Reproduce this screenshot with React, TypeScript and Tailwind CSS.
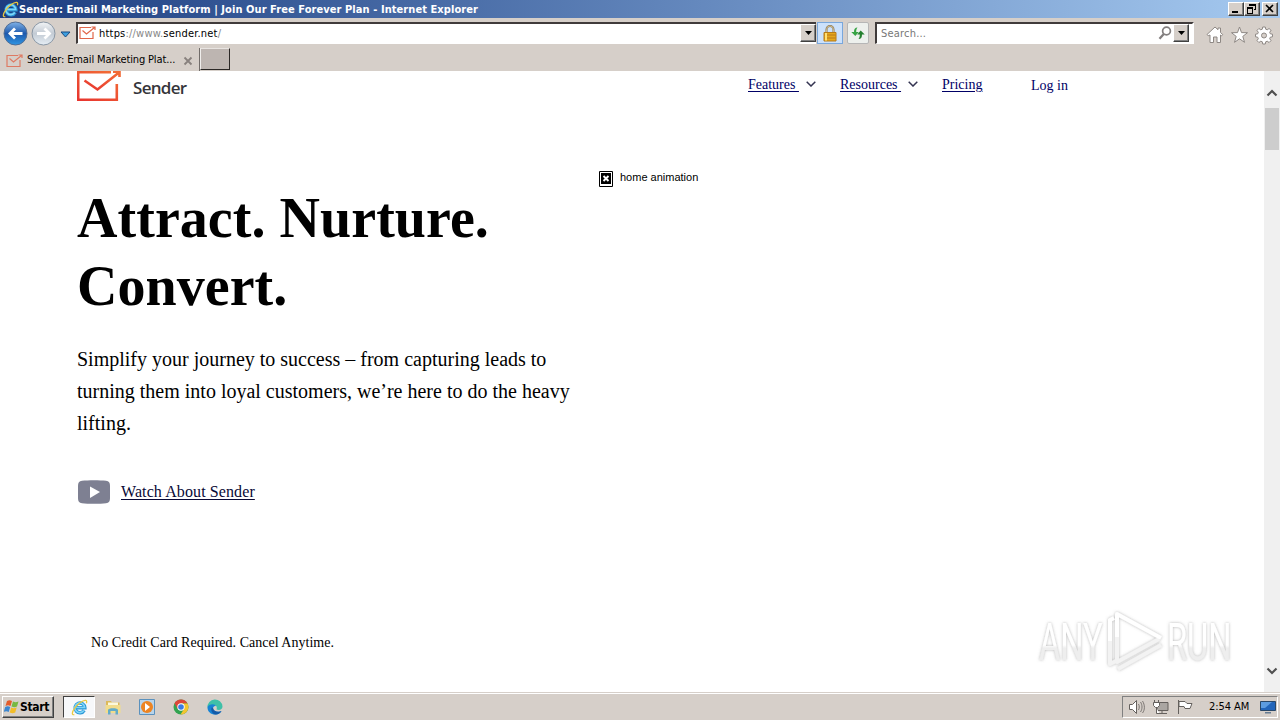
import type { ReactNode } from "react";

const tahoma = "font-['DejaVu_Sans_Condensed','DejaVu_Sans',sans-serif] [font-stretch:condensed]";
const raised =
  "border border-t-white border-l-white border-r-[#404040] border-b-[#404040] shadow-[inset_-1px_-1px_0_#808080]";

function IeLogo({ className }: { className: string }) {
  return (
    <svg viewBox="0 0 18 18" className={className} fill="none">
      <path d="M14 12a5.200 5.200 0 1 1 .7-2.700H5.500" stroke="#2b97d6" strokeWidth="3.600" />
      <path d="M13.600 12.200a5.200 5.200 0 1 1 .9-3.200H5.500" stroke="#7fd6f8" strokeWidth="1.700" />
      <path
        d="M3.500 16.600C.6 17.200.8 14 3.400 10.400 6.300 6 12.600.900 15.600 1.500c1.300.300 1.200 1.700.6 3"
        stroke="#ecc93c"
        strokeWidth="1.300"
      />
    </svg>
  );
}

function MailLogo({ className }: { className: string }) {
  return (
    <svg viewBox="0 0 17 14" className={className} fill="none" stroke="#e0664a" strokeWidth="1.200">
      <path d="M12 1.500H1v11h13V6M3.500 4.500 7.500 8 15.500 1.500M12.500 1h3.500v3" />
    </svg>
  );
}

function WinButton({ children }: { children: ReactNode }) {
  return (
    <button className={`h-[14px] w-4 bg-[#d6cfc9] ${raised}`}>
      <svg viewBox="0 0 14 12" className="h-3 w-[14px]" fill="none" stroke="#000" shapeRendering="crispEdges">
        {children}
      </svg>
    </button>
  );
}

function DropButton({ className }: { className: string }) {
  return (
    <button className={`flex items-center justify-center bg-[#d6cfc9] ${raised} ${className}`}>
      <svg viewBox="0 0 7 4" className="h-1 w-[7px]">
        <path d="M0 0h7L3.500 4z" />
      </svg>
    </button>
  );
}

function TitleBar() {
  return (
    <header className="flex h-[18px] items-center bg-linear-to-r from-[#1d3d80] from-0% via-[#6f93c6] via-62% to-[#a6caf0]">
      <IeLogo className="ml-[2px] h-[17px] w-[17px]" />
      <span className={`${tahoma} mt-[1px] w-[470px] text-[11px] leading-[17px] font-bold whitespace-nowrap text-white tracking-[0.07px]`}>
        Sender: Email Marketing Platform | Join Our Free Forever Plan - Internet Explorer
      </span>
      <div className="mr-[2px] ml-auto flex">
        <WinButton>
          <path d="M3 9h6" strokeWidth="2" />
        </WinButton>
        <WinButton>
          <path d="M4.500 1.500h6v5h-2M2.500 5v5h5V5" />
          <path d="M4 2h7M2 5h6" strokeWidth="2" />
        </WinButton>
        <div className="ml-[2px] flex">
          <WinButton>
            <path d="m3 2 7 7m0-7L3 9" strokeWidth="1.600" shapeRendering="auto" />
          </WinButton>
        </div>
      </div>
    </header>
  );
}

function Toolbar() {
  return (
    <div className="flex h-[30px] items-start bg-[#d6cfc9] pt-1">
      <svg viewBox="0 0 74 28" className="-mt-[2px] h-7 w-[74px]" fill="none">
        <defs>
          <linearGradient id="back" x2="0" y2="1">
            <stop stopColor="#7fb2e8" />
            <stop offset=".5" stopColor="#1f59ac" />
            <stop offset="1" stopColor="#2f96e4" />
          </linearGradient>
          <linearGradient id="forward" x2="0" y2="1">
            <stop stopColor="#f2f4f6" />
            <stop offset=".5" stopColor="#c3cbd4" />
            <stop offset="1" stopColor="#e6eef5" />
          </linearGradient>
        </defs>
        <circle cx="15.500" cy="13.500" r="11.500" fill="url(#back)" stroke="#526d93" />
        <circle cx="43.500" cy="13.500" r="11.500" fill="url(#forward)" stroke="#8996a4" />
        <path d="M22.500 13.500H10m5-5-5 5 5 5M37 13.500h12.500M44.500 8.500l5 5-5 5" stroke="#fff" strokeWidth="2.800" />
        <path d="M61 12h9l-4.500 5z" fill="#3c9fe0" stroke="#174980" />
      </svg>
      <div className="ml-[2px] flex h-[22px] w-[740px] border-t-2 border-l-2 border-b border-t-[#403b3b] border-l-[#403b3b] border-b-white bg-white">
        <MailLogo className="mt-[2px] ml-[1px] h-[14px] w-[17px]" />
        <span className={`${tahoma} ml-[3px] pt-[1px] text-[11px] leading-[18px] whitespace-nowrap text-[#888] tracking-[0.2px]`}>
          <span className="text-black">https</span>://www.<span className="text-black">sender.net</span>/
        </span>
        <DropButton className="ml-auto h-[18px] w-4" />
      </div>
      <button className="ml-[1px] flex h-[22px] w-[26px] items-center justify-center border border-[#79a7dc] bg-[#cce1fb]">
        <svg viewBox="0 0 14 17" className="h-[17px] w-[14px]" fill="none">
          <path d="M3.500 8V4.500a3.500 3.500 0 0 1 7 0V8" stroke="#8c7651" strokeWidth="2" />
          <path d="M3.500 8V4.500a3.500 3.500 0 0 1 7 0V8" stroke="#e5d6a8" strokeWidth=".7" />
          <path d="M1 7.500h12v8.500H1z" fill="#e5a71c" stroke="#b67a19" />
          <path d="M1.500 10h11m-11 3h11" stroke="#b9791b" />
          <path d="M3 8v7.500" stroke="#ffe075" strokeWidth="2" />
        </svg>
      </button>
      <button className="ml-1 flex h-[22px] w-[22px] items-center justify-center rounded-xs border border-[#b6b6b6] bg-[#edf0ed]">
        <svg viewBox="0 0 14 14" className="h-[14px] w-[14px]">
          <path d="M6.500 1.500C4 1.500 3 3 3 6H.3l4 4 3.500-4H5.200c0-2 .2-3 1.300-4.500z" fill="#36a344" />
          <path d="M7.500 13c2.500 0 3.500-1.500 3.500-4.500h2.700l-4-4-3.500 4h2.600c0 2-.2 3-1.300 4.500z" fill="#23802f" />
        </svg>
      </button>
      <div className="ml-[6px] flex h-[22px] w-[319px] border-t-2 border-l-2 border-r-2 border-b border-t-[#403b3b] border-l-[#403b3b] border-r-white border-b-white bg-white">
        <span className={`${tahoma} ml-1 pt-[1px] text-[11px] leading-[18px] text-[#777] tracking-[0.2px]`}>Search...</span>
        <svg viewBox="0 0 14 14" className="mt-[2px] ml-auto h-[14px] w-[14px]" fill="none" stroke="#827e7e">
          <circle cx="8.500" cy="5" r="3.900" strokeWidth="1.700" />
          <path d="m5.800 8-4.300 4.800" strokeWidth="2.300" />
        </svg>
        <DropButton className="mr-[3px] ml-[1px] h-[18px] w-4" />
      </div>
      <svg viewBox="0 0 72 20" className="mt-[3px] ml-[11px] h-5 w-[72px]" fill="#fff" stroke="#8e8884">
        <path d="m2 9.500 8-7.500 3 2.700V3h2.500v4.500l2.200 2-1.200 1.400-1-.9v7.500H12V12H8.500v5.500H5V10l-1.800.8z" />
        <path d="m34.500 2 2 5.600 6 .1-4.700 3.700 1.700 5.900-5-3.500-5 3.500 1.700-5.900-4.700-3.700 6-.1z" />
        <path d="M57.700 2h2.600l.4 2.200 1.500.6 1.900-1.300L66 5.400l-1.300 1.900.6 1.500 2.200.4v2.600l-2.200.4-.6 1.500 1.300 1.900-1.900 1.900-1.900-1.300-1.500.6-.4 2.200h-2.600l-.4-2.200-1.500-.6-1.900 1.300L52 15.600l1.300-1.900-.6-1.500-2.200-.4V9.200l2.200-.4.6-1.500L52 5.400l1.900-1.900 1.900 1.300 1.500-.6z" />
        <circle cx="59" cy="10.500" r="2.500" fill="#d6cfc9" />
      </svg>
    </div>
  );
}

function Tabs() {
  return (
    <div className="flex h-[23px] bg-[#d6cfc9]">
      <div className="flex w-[200px] items-center border-r border-[#716c69] pt-[2px]">
        <MailLogo className="ml-[6px] h-[14px] w-[17px] opacity-80" />
        <span className={`${tahoma} ml-1 w-[151px] text-[11px] whitespace-nowrap text-black tracking-[-0.14px]`}>
          Sender: Email Marketing Plat...
        </span>
        <svg viewBox="0 0 10 10" className="ml-[5px] h-[10px] w-[10px]" stroke="#88817e" strokeWidth="1.800">
          <path d="m1.500 1.500 7 7m0-7-7 7" />
        </svg>
      </div>
      <div className="h-[22px] w-[30px] border border-t-[#e8e4e1] border-l-[#f0eeec] border-r-[#2a2725] border-b-[#2a2725] bg-[#bdb5b1]" />
    </div>
  );
}

function Chevron() {
  return (
    <svg viewBox="0 0 10 6" className="mt-[10px] h-[6px] w-[10px]" fill="none" stroke="#343451" strokeWidth="1.500">
      <path d="m.700.700 4.300 4.300L9.300.700" />
    </svg>
  );
}

function Nav() {
  return (
    <div className="flex h-[34px] pl-[77px]">
      <div className="flex w-[671px]">
        <svg viewBox="0 0 44 30" className="h-[30px] w-[44px]" fill="none" stroke="url(#brand)">
          <defs>
            <linearGradient id="brand" x1="0" y1="1" x2=".8" y2="0">
              <stop stopColor="#e8352f" />
              <stop offset="1" stopColor="#f26a35" />
            </linearGradient>
          </defs>
          <path d="M34 1.200H1.200v27.600h38.600V13" strokeWidth="2.600" />
          <path d="m7.500 9.500 13 9L42 1.500M36 .7h6.500V6" strokeWidth="2.600" />
        </svg>
        <span className="mt-[5px] ml-3 font-['Open_Sans',sans-serif] text-[17px] leading-6 font-semibold tracking-[-0.7px] text-[#35353a]">
          Sender
        </span>
      </div>
      <nav className="flex text-sm leading-[28px] text-[#000066]">
        <a className="w-[58px] whitespace-pre underline underline-offset-2">{"Features "}</a>
        <Chevron />
        <a className="ml-6 w-[68px] whitespace-pre underline underline-offset-2">{"Resources "}</a>
        <Chevron />
        <a className="ml-6 w-[89px] underline underline-offset-2">Pricing</a>
        <a className="mt-[1px]">Log in</a>
      </nav>
    </div>
  );
}

function Watermark() {
  return (
    <svg viewBox="0 0 210 76" className="absolute top-[532px] left-[1030px] h-[76px] w-[210px]" fill="none">
      <defs>
        <filter id="halo" x="-10%" y="-10%" width="120%" height="120%">
          <feDropShadow dx="0" dy="0" stdDeviation="1.800" floodColor="#777" floodOpacity=".55" />
        </filter>
        <linearGradient id="fade" x1="0" y1="0" x2="0" y2="1">
          <stop offset=".55" stopColor="#fff" />
          <stop offset=".6" stopColor="#eeeeee" />
        </linearGradient>
      </defs>
      <g filter="url(#halo)">
        <g fill="url(#fade)" className="font-[Roboto,sans-serif]" fontSize="51">
          <text transform="translate(9 57) scale(.64 1)">ANY</text>
          <text transform="translate(137 57) scale(.64 1)">RUN</text>
        </g>
        <g strokeLinejoin="round">
          <path d="M80 16v45l6-3M88 66l43-24" stroke="#f3f3f3" strokeWidth="4" />
          <path d="M87 11v48l42-23" stroke="#f3f3f3" strokeWidth="4" />
          <path d="M87 34V11l44 24M80 38V17l4-2" stroke="#fff" strokeWidth="4" />
        </g>
      </g>
    </svg>
  );
}

function Page() {
  return (
    <div className="relative flex h-[621px] bg-white font-['Liberation_Serif',serif] text-black">
      <main className="w-[1264px]">
        <Nav />
        <div className="flex pl-[77px]">
          <section className="w-[522px]">
            <h1 className="mt-[79px] text-[56px] leading-[68px] font-bold tracking-[0.05px]">
              Attract. Nurture.
              <br />
              Convert.
            </h1>
            <p className="mt-[23px] text-[20px] leading-8 whitespace-nowrap">
              Simplify your journey to success – from capturing leads to
              <br />
              turning them into loyal customers, we’re here to do the heavy
              <br />
              lifting.
            </p>
            <a className="mt-[37px] flex h-8 items-center text-base tracking-[0.1px] text-[#080835]">
              <svg viewBox="0 0 32 24" className="mr-[11px] ml-[1px] h-6 w-8">
                <path d="M4 .8C10 0 22 0 28 .8c3 .4 4 2 4 5v12.400c0 3-1 4.600-4 5C22 24 10 24 4 23.200c-3-.4-4-2-4-5V5.800c0-3 1-4.600 4-5z" fill="#7e8092" />
                <path d="m12 6.500 10 5.500-10 6z" fill="#fff" />
              </svg>
              <span className="underline underline-offset-2">Watch About Sender</span>
            </a>
            <p className="mt-[125px] ml-[14px] text-sm leading-5 tracking-[0.02px]">No Credit Card Required. Cancel Anytime.</p>
          </section>
          <div className="mt-[65px] flex h-[17px] font-['Liberation_Sans',sans-serif] text-[11px] leading-[15px]">
            <svg viewBox="0 0 14 16" className="mt-[1px] h-4 w-[14px]">
              <path d="M.5.500h13v15H.500z" fill="#fff" stroke="#000" />
              <path d="M2 2h10v11H2z" />
              <path d="m4.500 5 5 5m0-5-5 5" stroke="#fff" strokeWidth="1.900" />
            </svg>
            <span className="ml-[7px]">home animation</span>
          </div>
        </div>
      </main>
      <aside className="flex w-4 flex-col items-center bg-[#f0f0f0] pt-[18px]">
        <svg viewBox="0 0 12 8" className="h-2 w-3" fill="none" stroke="#505050" strokeWidth="2.200">
          <path d="m1.500 6.500 4.500-4.500 4.500 4.500" />
        </svg>
        <div className="mt-[11px] h-[42px] w-[14px] bg-[#cdcdcd]" />
        <svg viewBox="0 0 12 8" className="mt-auto mb-[17px] h-2 w-3" fill="none" stroke="#505050" strokeWidth="2.200">
          <path d="m1.500 1.500 4.500 4.500 4.500-4.500" />
        </svg>
      </aside>
      <Watermark />
    </div>
  );
}

function Taskbar() {
  return (
    <footer className="flex h-7 items-start border-t border-[#d6cfc9] bg-[#d6cfc9] pt-[3px] shadow-[inset_0_1px_0_#fff]">
      <button className={`ml-[2px] flex h-[22px] w-[52px] items-center bg-[#d6cfc9] ${raised}`}>
        <svg viewBox="0 0 16 16" className="ml-[1px] h-4 w-4">
          <path d="M3 2c2-1 3-1 5 0L6.500 7c-2-1-3-1-5 0z" fill="#e45c2a" />
          <path d="M9 2.500c2 1 3 1 5.500 0L13 7.500c-2 1-3 1-5.500 0z" fill="#77b943" />
          <path d="M1.200 8c2-1 3-1 5 0L4.700 13c-2-1-3-1-5 0z" fill="#3c86cf" />
          <path d="M7.200 8.500c2 1 3 1 5.500 0l-1.500 5c-2 1-3 1-5.500 0z" fill="#f2bd29" />
        </svg>
        <span className={`${tahoma} text-xs font-bold tracking-[-0.350px] text-black`}>Start</span>
      </button>
      <div className="ml-[9px] flex h-[22px] w-8 items-center justify-center border border-t-[#404040] border-l-[#404040] border-r-white border-b-white bg-[#f7f8fa]">
        <IeLogo className="h-[17px] w-[17px]" />
      </div>
      <svg viewBox="0 0 16 16" className="mt-[3px] ml-[10px] h-4 w-4">
        <path d="M1 2h5l1 1.500h7.500V9H1z" fill="#dcb95a" />
        <path d="M3 3.500h10v4H3z" fill="#fbf8dc" />
        <path d="M.5 6h15v8H.500z" fill="#f1dc8c" />
        <path d="M3 15.500V11c0-2.500 10-2.500 10 0v4.500h-2.500V12h-5v3.500z" fill="#62abc8" />
      </svg>
      <svg viewBox="0 0 16 16" className="mt-[3px] ml-[18px] h-4 w-4">
        <path d="M.5.500h15v15H.500z" fill="#b8d4ea" stroke="#5b91bd" />
        <circle cx="8" cy="8" r="6" fill="#ed8422" />
        <path d="m6 4 5 4-5 4z" fill="#fff" />
      </svg>
      <svg viewBox="0 0 16 16" className="mt-[3px] ml-[18px] h-4 w-4">
        <circle cx="8" cy="8" r="7.500" fill="#32a350" />
        <path d="M1.500 4.200A7.500 7.500 0 0 1 14.500 4.500H8L4.700 10z" fill="#dc4639" />
        <path d="M14.500 4.500A7.500 7.500 0 0 1 7.500 15.500L11 10 8 4.500z" fill="#f4c52f" />
        <circle cx="8" cy="8" r="3.700" fill="#fff" />
        <circle cx="8" cy="8" r="2.800" fill="#397be3" />
      </svg>
      <svg viewBox="0 0 16 16" className="mt-[3px] ml-[18px] h-4 w-4">
        <path d="M.5 8.500A7.500 7.500 0 0 1 15.500 7.500c0 3-3 4-6 3 .8-2 .3-4.500-3-4.500-3 0-5 1-6 2.500z" fill="#3fc0a8" />
        <path d="M.5 8C2 4.500 8.500 4.300 9 7.300c-1-1-3 0-3 2 0 3 4.500 4.700 8.500 2.700C13 15 9.500 16 6.500 15.500 2.500 14.500.3 11.500.5 8z" fill="#1783d4" />
        <path d="M4.700 8.500C3.500 11 5 14.500 8 15.500c3 .2 5.500-1.500 6.500-3.500-3.500 1.500-8 .5-8.500-3z" fill="#145ba8" />
      </svg>
      <div className="mr-[2px] ml-auto flex h-[22px] w-[156px] items-center border border-t-[#808080] border-l-[#808080] border-r-white border-b-white">
        <svg viewBox="0 0 66 18" className="ml-[5px] h-[18px] w-[66px]" fill="#fff" stroke="#64605d">
          <path d="M1.500 6.500h3l4-4v13l-4-4h-3z" />
          <path d="M10.500 6c1 2 1 4 0 6m2-8c2 3 2 7 0 10m2-11c2.500 4 2.500 9 0 12" fill="none" strokeWidth=".8" />
          <path d="M29 4.500h11v8H29z" fill="#aaa6a2" />
          <path d="M29 15.500h10M34 13v2M26.500 2v3m4-3v3M25.500 4.500h6v3l-2 2h-2l-2-2zM28.500 10v5.500h3" />
          <path d="M50.500 2v14M51 3.500h6l2 2h5l-2 5h-5l-1-2h-5z" />
        </svg>
        <span className={`${tahoma} mt-[1px] ml-[15px] w-[42px] text-[11px] whitespace-nowrap tracking-[-0.050px] text-black`}>2:54 AM</span>
        <svg viewBox="0 0 16 14" className="ml-[9px] h-[14px] w-4">
          <path d="M.5 1.500h15v9H.500z" fill="#2265ba" stroke="#284768" />
          <path d="M1 2h11L5 8H1z" fill="#5c9ce0" />
          <path d="M5 12h6v1.500H5z" fill="#647a91" />
        </svg>
      </div>
    </footer>
  );
}

export default function App() {
  return (
    <div className="h-[720px] w-[1280px] overflow-hidden bg-[#d6cfc9]">
      <TitleBar />
      <Toolbar />
      <Tabs />
      <Page />
      <Taskbar />
    </div>
  );
}
